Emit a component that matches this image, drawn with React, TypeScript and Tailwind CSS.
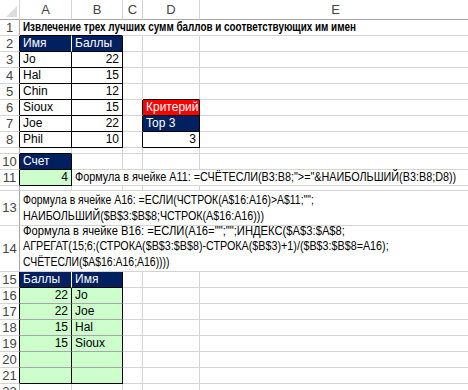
import React from "react";

const font = { fontFamily: "'Liberation Sans', Arial, sans-serif" };

type Edge = "g" | "k" | "n" | "w" | "h";

function edgeR(e: Edge) {
  if (e === "k") return "border-r-black";
  if (e === "n") return "border-r-transparent";
  if (e === "w") return "border-r-white";
  if (e === "h") return "border-r-[#a6a6a6]";
  return "border-r-[#d4d4d4]";
}

function edgeB(e: Edge) {
  if (e === "k") return "border-b-black";
  if (e === "n") return "border-b-transparent";
  if (e === "w") return "border-b-white";
  if (e === "h") return "border-b-[#a6a6a6]";
  return "border-b-[#d4d4d4]";
}

function C({
  r = "g",
  b = "g",
  bg = "",
  right = false,
  span = "",
  children,
}: {
  r?: Edge;
  b?: Edge;
  bg?: string;
  right?: boolean;
  span?: string;
  children?: React.ReactNode;
}) {
  return (
    <div
      className={`flex items-end whitespace-nowrap border-r border-b px-[3px] pb-[1px] leading-[14px] ${edgeR(r)} ${edgeB(b)} ${bg} ${span} ${
        right ? "justify-end" : "justify-start"
      }`}
    >
      {children}
    </div>
  );
}

function RowHead({ n, r = "h" }: { n?: number; r?: Edge }) {
  return (
    <div
      className={`flex items-center justify-center overflow-hidden border-r border-b border-b-[#d4d4d4] text-[13px] text-[#444] ${edgeR(r)}`}
    >
      {n}
    </div>
  );
}

// long strings are squeezed a little so they take the width Calibri gives them in Excel
function Sq({ s, children }: { s: string; children: React.ReactNode }) {
  return <span className={`relative z-10 inline-block origin-left whitespace-nowrap ${s}`}>{children}</span>;
}

const navy = "bg-[#002060] text-white";
const green = "bg-[#ccffcc]";

export default function App() {
  const data = [
    ["Jo", 22],
    ["Hal", 15],
    ["Chin", 12],
    ["Sioux", 15],
    ["Joe", 22],
    ["Phil", 10],
  ] as const;

  const top = [
    [22, "Jo"],
    [22, "Joe"],
    [15, "Hal"],
    [15, "Sioux"],
  ] as const;

  return (
    <div className="w-[468px] h-[390px] overflow-hidden bg-white text-black text-[12px]" style={font}>
      <div className="grid w-[472px] grid-cols-[20px_52px_51px_20px_57px_272px] grid-rows-[20px_16px_16px_16px_16px_16px_16px_16px_16px_6px_16px_16px_5px_35px_46px_16px_16px_16px_16px_16px_16px_16px_16px]">
        {/* column headers */}
        <div className="relative border-r border-b border-r-[#d4d4d4] border-b-[#a6a6a6]">
          <svg width="11" height="11" viewBox="0 0 11 11" className="absolute right-[2px] bottom-[2px]">
            <polygon points="11,0 11,11 0,11" fill="#dcdcdc" />
          </svg>
        </div>
        {["A", "B", "C", "D", "E"].map((l) => (
          <div
            key={l}
            className="flex items-center justify-center border-r border-b border-r-[#d4d4d4] border-b-[#a6a6a6] text-[13px] text-[#444]"
          >
            {l}
          </div>
        ))}

        {/* row 1 */}
        <RowHead n={1} />
        <C r="n" b="k">
          <Sq s="scale-x-[0.823] font-bold">Извлечение трех лучших сумм баллов и соответствующих им имен</Sq>
        </C>
        <C r="n" b="k" />
        <C r="n" />
        <C r="n" />
        <C />

        {/* row 2 */}
        <RowHead n={2} r="k" />
        <C r="w" b="k" bg={navy}>Имя</C>
        <C r="k" b="k" bg={navy}>Баллы</C>
        <C />
        <C />
        <C />

        {/* rows 3-8 */}
        {data.map(([name, pts], i) => {
          const row = i + 3;
          return (
            <React.Fragment key={row}>
              <RowHead n={row} r="k" />
              <C r="k" b="k">{name}</C>
              <C r="k" b="k" right>{pts}</C>
              <C r={row >= 6 ? "k" : "g"} />
              {row === 5 && <C b="k" />}
              {row === 6 && (
                <C r="k" b="k" bg="bg-[#ff0000] text-white">Критерий</C>
              )}
              {row === 7 && (
                <C r="k" b="k" bg={navy}>Top 3</C>
              )}
              {row === 8 && (
                <C r="k" b="k" right>3</C>
              )}
              {row < 5 && <C />}
              <C />
            </React.Fragment>
          );
        })}

        {/* row 9 (squeezed) */}
        <RowHead />
        <C b="k" />
        <C />
        <C />
        <C />
        <C />

        {/* row 10 */}
        <RowHead n={10} r="k" />
        <C r="k" b="k" bg={navy}>Счет</C>
        <C />
        <C />
        <C />
        <C />

        {/* row 11 */}
        <RowHead n={11} r="k" />
        <C r="k" b="k" bg={green} right>4</C>
        <C r="n" span="col-span-3">
          <Sq s="scale-x-[0.90]">
            Формула в ячейке A11: =СЧЁТЕСЛИ(B3:B8;"&gt;="&amp;НАИБОЛЬШИЙ(B3:B8;D8))
          </Sq>
        </C>
        <C />

        {/* row 12 (squeezed) */}
        <RowHead />
        <C />
        <C />
        <C />
        <C />
        <C />

        {/* row 13 */}
        <RowHead n={13} />
        <div className="col-span-5 flex flex-col items-start justify-end border-r border-b border-r-[#d4d4d4] border-b-[#d4d4d4] px-[3px] pb-[1px] leading-[15.5px]">
          <Sq s="scale-x-[0.87]">Формула в ячейке A16: =ЕСЛИ(ЧСТРОК(A$16:A16)&gt;A$11;"";</Sq>
          <Sq s="scale-x-[0.895]">НАИБОЛЬШИЙ($B$3:$B$8;ЧСТРОК(A$16:A16)))</Sq>
        </div>

        {/* row 14 */}
        <RowHead n={14} />
        <div className="col-span-5 flex flex-col items-start justify-end border-r border-b border-r-[#d4d4d4] border-b-[#d4d4d4] px-[3px] pb-[1px] leading-[15.5px]">
          <Sq s="scale-x-[0.935]">Формула в ячейке B16: =ЕСЛИ(A16="";"";ИНДЕКС($A$3:$A$8;</Sq>
          <Sq s="scale-x-[0.896]">АГРЕГАТ(15;6;(СТРОКА($B$3:$B$8)-СТРОКА($B$3)+1)/($B$3:$B$8=A16);</Sq>
          <Sq s="scale-x-[0.87]">СЧЁТЕСЛИ($A$16:A16;A16))))</Sq>
        </div>

        {/* row 15 */}
        <RowHead n={15} r="k" />
        <C r="w" b="k" bg={navy}>Баллы</C>
        <C r="k" b="k" bg={navy}>Имя</C>
        <C />
        <C />
        <C />

        {/* rows 16-21 */}
        {[16, 17, 18, 19, 20, 21].map((row, i) => {
          const t = top[i];
          const last = row === 21;
          return (
            <React.Fragment key={row}>
              <RowHead n={row} r="k" />
              <C r="k" b={last ? "k" : "h"} bg={green} right>{t ? t[0] : ""}</C>
              <C r="k" b={last ? "k" : "h"} bg={green}>{t ? t[1] : ""}</C>
              <C />
              <C />
              <C />
            </React.Fragment>
          );
        })}

        {/* row 22 */}
        <RowHead n={22} />
        <C />
        <C />
        <C />
        <C />
        <C />
      </div>
    </div>
  );
}
